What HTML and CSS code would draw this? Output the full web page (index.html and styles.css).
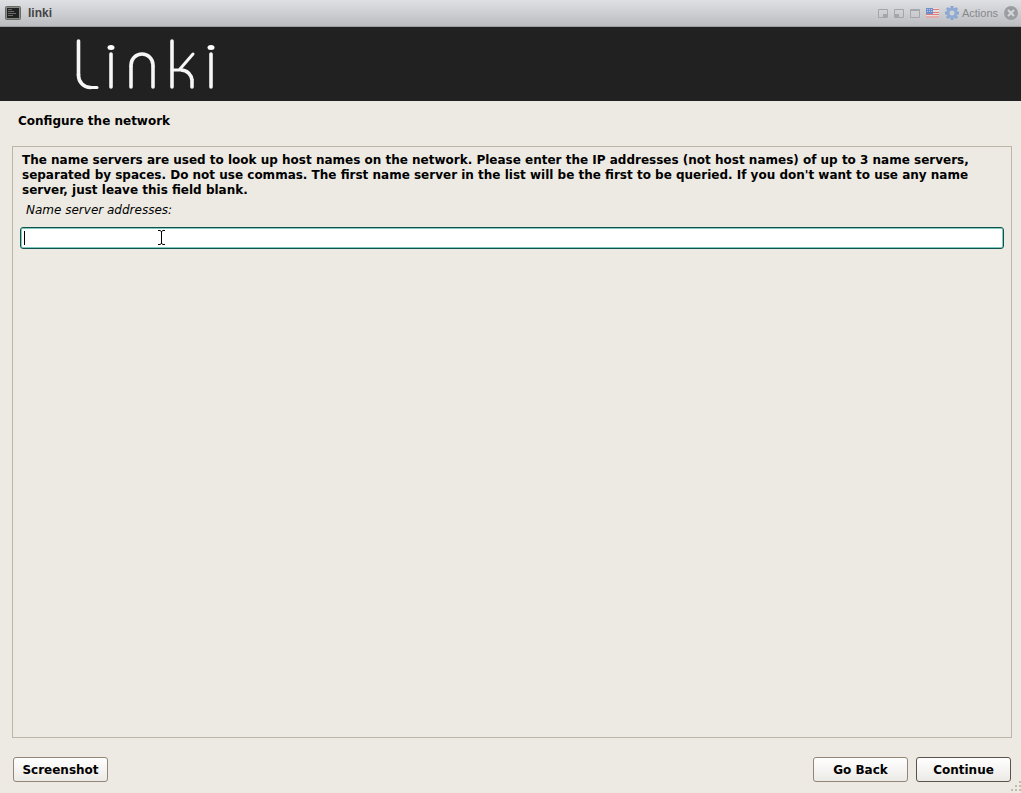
FILE: index.html
```html
<!DOCTYPE html>
<html lang="en">
<head>
<meta charset="utf-8">
<title>linki</title>
<link rel="stylesheet" href="styles.css">
</head>
<body>
<header class="titlebar">
  <svg class="terminal" width="16" height="14" viewBox="0 0 16 14" aria-hidden="true">
    <rect x=".5" y=".5" width="15" height="13" rx="1" fill="#8a8a86" stroke="#6a6a66"/>
    <rect x="2" y="2" width="12" height="10" fill="#222"/>
    <path d="M3 3.500h4M3 5.500h6M3 7.500h8M3 9.500h5" stroke="#6c6c6c"/>
  </svg>
  <span class="name">linki</span>
  <div class="tools">
    <button class="tool" aria-label="Small window"><svg width="10" height="9" viewBox="0 0 10 9"><path d="M.5.5h9v8h-9z" fill="none" stroke="#a5a6aa"/><path d="M5 5h4v3H5z" fill="#a5a6aa"/></svg></button>
    <button class="tool" aria-label="Dock window"><svg width="10" height="9" viewBox="0 0 10 9"><path d="M.5.5h9v8h-9z" fill="none" stroke="#a5a6aa"/><path d="M1 5h4v3H1z" fill="#a5a6aa"/></svg></button>
    <button class="tool" aria-label="Full window"><svg width="10" height="9" viewBox="0 0 10 9"><path d="M.5.5h9v8h-9zM0 1.500h10" fill="none" stroke="#a5a6aa"/></svg></button>
    <button class="tool" aria-label="Keyboard layout"><svg width="13" height="10" viewBox="0 0 13 10"><path d="M0 0h13v10H0z" fill="#e9dcdd"/><path d="M0 1.500h13M0 4.500h13M0 6.500h13M0 9h13" stroke="#dd7c78"/><path d="M0 0h7v6H0z" fill="#6f8fcb"/><path d="M1 1.500h5M1 3.500h5" stroke="#b9c8e6" stroke-dasharray="1 1"/></svg></button>
    <button class="tool actions"><svg width="14" height="14" viewBox="0 0 14 14"><g stroke="#89a5cd" stroke-width="3"><path d="M7 0v14M0 7h14M2 2l10 10M12 2L2 12"/></g><circle cx="7" cy="7" r="4" fill="none" stroke="#8fabd4" stroke-width="3"/><circle cx="7" cy="7" r="2.500" fill="#cfd1d6"/></svg>Actions</button>
    <button class="tool" aria-label="Close"><svg width="14" height="14" viewBox="0 0 14 14"><circle cx="7" cy="7" r="7" fill="#9c9da0"/><path d="M4 4l6 6M10 4l-6 6" stroke="#d6d7da" stroke-width="2"/></svg></button>
  </div>
</header>

<div class="banner">
  <svg class="logo" width="142" height="54" viewBox="0 0 142 54" role="img" aria-label="linki">
    <g fill="none" stroke="#f6f6f6" stroke-width="3.6" stroke-linecap="round">
      <line x1="3.500" y1="4" x2="3.500" y2="38"/>
      <svg x="0" y="37" width="16" height="17"><rect x="3.500" y="-25" width="40" height="38.500" rx="12"/></svg>
      <line x1="16" y1="50.500" x2="22" y2="50.500" stroke-width="3"/>
      <line x1="36" y1="17" x2="36" y2="50"/>
      <line x1="56" y1="30" x2="56" y2="50"/>
      <svg x="50" y="12" width="36" height="18"><rect x="6" y="5" width="22" height="40" rx="11"/></svg>
      <line x1="78" y1="30" x2="78" y2="50"/>
      <line x1="97" y1="4" x2="97" y2="50"/>
      <line x1="118" y1="17" x2="105" y2="32" stroke-width="3"/>
      <line x1="97" y1="33" x2="106" y2="33" stroke-width="3"/>
      <svg x="106" y="28" width="16" height="15"><rect x="-20" y="5" width="31" height="40" rx="11"/></svg>
      <line x1="117" y1="43" x2="117" y2="50"/>
      <line x1="136" y1="17" x2="136" y2="50"/>
    </g>
    <ellipse cx="36" cy="10.500" rx="3.500" ry="2.500" fill="#fff"/>
    <ellipse cx="136" cy="10.500" rx="3.500" ry="2.500" fill="#fff"/>
  </svg>
</div>

<main class="installer">
  <h1 class="heading">Configure the network</h1>
  <section class="panel">
    <p class="description">The name servers are used to look up host names on the network. Please enter the IP addresses (not host names) of up to 3 name servers, separated by spaces. Do not use commas. The first name server in the list will be the first to be queried. If you don't want to use any name server, just leave this field blank.</p>
    <label class="label" for="servers">Name server addresses:</label>
    <div class="field">
      <input class="input" id="servers" type="text">
      <span class="caret"></span>
      <svg class="pointer" width="9" height="15" viewBox="0 0 9 15" aria-hidden="true"><path d="M1 .5h2l1.500 1 1.500-1h2M4.500 1v13M1 14.500h2l1.500-1 1.500 1h2" fill="none" stroke="#000"/></svg>
    </div>
  </section>
  <footer class="footer">
    <button class="button">Screenshot</button>
    <div class="nav">
      <button class="button">Go Back</button>
      <button class="button primary">Continue</button>
    </div>
  </footer>
</main>
<svg class="grip" width="11" height="11" viewBox="0 0 11 11" aria-hidden="true"><path d="M9 1h2M5 5h2M9 5h2M1 9h2M5 9h2M9 9h2" stroke="#c1bcab" stroke-width="2"/></svg>
</body>
</html>
```
FILE: styles.css
```css
* {
  box-sizing: border-box;
}

body {
  display: flex;
  flex-direction: column;
  min-height: 100vh;
  margin: 0;
  background: #edeae3;
  color: #000;
  font: 12px/15px "DejaVu Sans", sans-serif;
}

svg {
  display: block;
}

.titlebar {
  display: flex;
  align-items: center;
  gap: 7px;
  height: 27px;
  padding: 0 3px 0 5px;
  background: linear-gradient(#dfe0e4, #bcbdc1);
  border-bottom: 1px solid #9c9da0;
  font-family: "Liberation Sans", Arial, sans-serif;
}

.name {
  color: #444;
  font-weight: bold;
}

.tools {
  display: flex;
  align-items: center;
  gap: 6px;
  margin-left: auto;
}

.tool {
  display: flex;
  align-items: center;
  gap: 3px;
  padding: 0;
  border: 0;
  background: none;
  color: #87888b;
  font: 11px/15px "Liberation Sans", Arial, sans-serif;
}

.banner {
  padding: 10px 75px;
  background: #212121;
}

.installer {
  display: flex;
  flex: 1;
  flex-direction: column;
  padding: 13px 9px 11px 12px;
}

.heading {
  margin: 0 6px 17px;
  font-size: 12px;
  line-height: 15px;
}

.panel {
  flex: 1;
  padding: 6px 7px;
  border: 1px solid #bdb6a6;
}

.description {
  margin: 0 2px 5px;
  font-weight: bold;
}

.label {
  display: block;
  margin: 0 6px 9px;
  font-style: italic;
}

.field {
  position: relative;
}

.input {
  display: block;
  width: 100%;
  height: 22px;
  padding: 0 4px;
  border: 1px solid #10524e;
  border-radius: 3px;
  outline: 0;
  background: #fff;
  box-shadow: inset 0 0 0 1px #80c8c0;
  font: inherit;
}

.caret {
  position: absolute;
  top: 4px;
  left: 4px;
  width: 1px;
  height: 14px;
  background: #000;
}

.pointer {
  position: absolute;
  top: 3px;
  left: 137px;
}

.footer {
  display: flex;
  justify-content: space-between;
  padding: 19px 1px 0;
}

.nav {
  display: flex;
  gap: 8px;
}

.button {
  min-width: 95px;
  height: 25px;
  padding: 1px 8px 0;
  border: 1px solid #948677;
  border-radius: 3px;
  background: linear-gradient(#fff, #eceae6);
  color: #000;
  font: bold 12px/15px "DejaVu Sans", sans-serif;
}

.primary {
  border-color: #5a534b;
}

.grip {
  position: absolute;
  right: 0;
  bottom: 1px;
}
```
